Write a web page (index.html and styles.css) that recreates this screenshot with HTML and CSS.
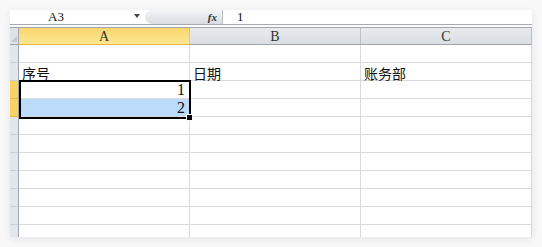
FILE: index.html
```html
<!DOCTYPE html>
<html lang="zh-CN">
<head>
    <meta charset="UTF-8">
    <title>Sheet</title>
    <link rel="stylesheet" href="styles.css">
</head>
<body>
    <div class="window">
        <div class="formula-bar">
            <div class="name-box">
                <span class="name">A3</span>
                <span class="arrow"></span>
            </div>
            <div class="pill"><span class="fx">fx</span></div>
            <div class="formula">1</div>
        </div>
        <div class="gap"></div>
        <div class="sheet">
            <div class="grid">
                <div class="corner"><span class="tri"></span></div>
                <div class="col-head active">A</div>
                <div class="col-head">B</div>
                <div class="col-head">C</div>

                <div class="row-head"></div><div class="cell"></div><div class="cell"></div><div class="cell"></div>
                <div class="row-head"></div><div class="cell text">序号</div><div class="cell text">日期</div><div class="cell text">账务部</div>
                <div class="row-head active"></div><div class="cell num">1</div><div class="cell"></div><div class="cell"></div>
                <div class="row-head active"></div><div class="cell num picked">2</div><div class="cell"></div><div class="cell"></div>
                <div class="row-head"></div><div class="cell"></div><div class="cell"></div><div class="cell"></div>
                <div class="row-head"></div><div class="cell"></div><div class="cell"></div><div class="cell"></div>
                <div class="row-head"></div><div class="cell"></div><div class="cell"></div><div class="cell"></div>
                <div class="row-head"></div><div class="cell"></div><div class="cell"></div><div class="cell"></div>
                <div class="row-head"></div><div class="cell"></div><div class="cell"></div><div class="cell"></div>
                <div class="row-head"></div><div class="cell"></div><div class="cell"></div><div class="cell"></div>
                <div class="row-head"></div><div class="cell"></div><div class="cell"></div><div class="cell"></div>
            </div>
            <div class="selection"><span class="handle"></span></div>
        </div>
    </div>
</body>
</html>
```

FILE: styles.css
```css
body {
    margin: 0;
    padding: 10px;
    background-color: #f8f8f8;
    font-family: "Liberation Serif", "Noto Sans CJK SC", serif;
}

.window {
    width: 522px;
    height: 227px;
    background-color: #fff;
    overflow: hidden;
    box-shadow: 0 2px 8px rgba(0, 0, 0, 0.08);
}

/* formula bar */
.formula-bar {
    display: flex;
    align-items: center;
    height: 14px;
    border-bottom: 1px solid #a7abb0;
    font-size: 13px;
    line-height: 14px;
    color: #111;
}

.name-box {
    width: 132px;
    display: flex;
    align-items: center;
    position: relative;
}

.name {
    margin-left: 38px;
}

.arrow {
    position: absolute;
    left: 124px;
    top: 4px;
    border-left: 3px solid transparent;
    border-right: 3px solid transparent;
    border-top: 4px solid #444;
}

.pill {
    width: 77px;
    height: 14px;
    margin-left: 3px;
    border-radius: 7px 0 0 7px;
    background: linear-gradient(#f4f5f7, #d9dce1);
    border-right: 1px solid #b8bcc2;
    display: flex;
    justify-content: flex-end;
    align-items: center;
}

.fx {
    font-family: "Liberation Serif", serif;
    font-style: italic;
    font-weight: bold;
    font-size: 11px;
    margin-right: 5px;
    color: #333;
}

.formula {
    margin-left: 14px;
}

.gap {
    height: 2px;
    background-color: #fbfbfc;
}

/* sheet */
.sheet {
    position: relative;
}

.grid {
    display: grid;
    grid-template-columns: 9px 171px 171px 171px;
    grid-auto-rows: 18px;
    font-size: 14px;
}

.corner {
    background-color: #dfe2e6;
    border-top: 1px solid #a3a7ad;
    border-bottom: 1px solid #9fa4ab;
    border-right: 1px solid #a3a7ad;
    box-sizing: border-box;
    position: relative;
}

.tri {
    position: absolute;
    right: 1px;
    bottom: 2px;
    border-left: 6px solid transparent;
    border-bottom: 6px solid #c3c7cc;
}

.col-head {
    background: linear-gradient(#e8ebee, #dadee3);
    border-top: 1px solid #a3a7ad;
    border-bottom: 1px solid #9fa4ab;
    border-right: 1px solid #bcc0c5;
    box-sizing: border-box;
    text-align: center;
    line-height: 17px;
    font-size: 14px;
    color: #333;
}

.col-head.active {
    background: linear-gradient(#f9d66f, #fde78f);
    border-bottom-color: #e8b23f;
    border-right-color: #e2c170;
}

.row-head {
    background-color: #e3e6ea;
    border-right: 1px solid #9fa4ab;
    border-bottom: 1px solid #c9cdd2;
    box-sizing: border-box;
}

.row-head.active {
    background-color: #f8d265;
    border-bottom-color: #e5b64f;
}

.cell {
    border-right: 1px solid #dadada;
    border-bottom: 1px solid #dadada;
    box-sizing: border-box;
    line-height: 18px;
    color: #111;
}

.cell.text {
    font-family: "Noto Sans CJK SC", sans-serif;
    padding-left: 3px;
    line-height: 16px;
    padding-top: 2px;
}

.cell.num {
    text-align: right;
    padding-right: 4px;
    font-size: 16px;
}

.cell.picked {
    background-color: #bcdbfb;
}

.selection {
    position: absolute;
    left: 9px;
    top: 53px;
    width: 172px;
    height: 39px;
    border: 2px solid #000;
    box-sizing: border-box;
}

.handle {
    position: absolute;
    right: -4px;
    bottom: -4px;
    width: 5px;
    height: 5px;
    background-color: #000;
    border: 1px solid #fff;
}
```
